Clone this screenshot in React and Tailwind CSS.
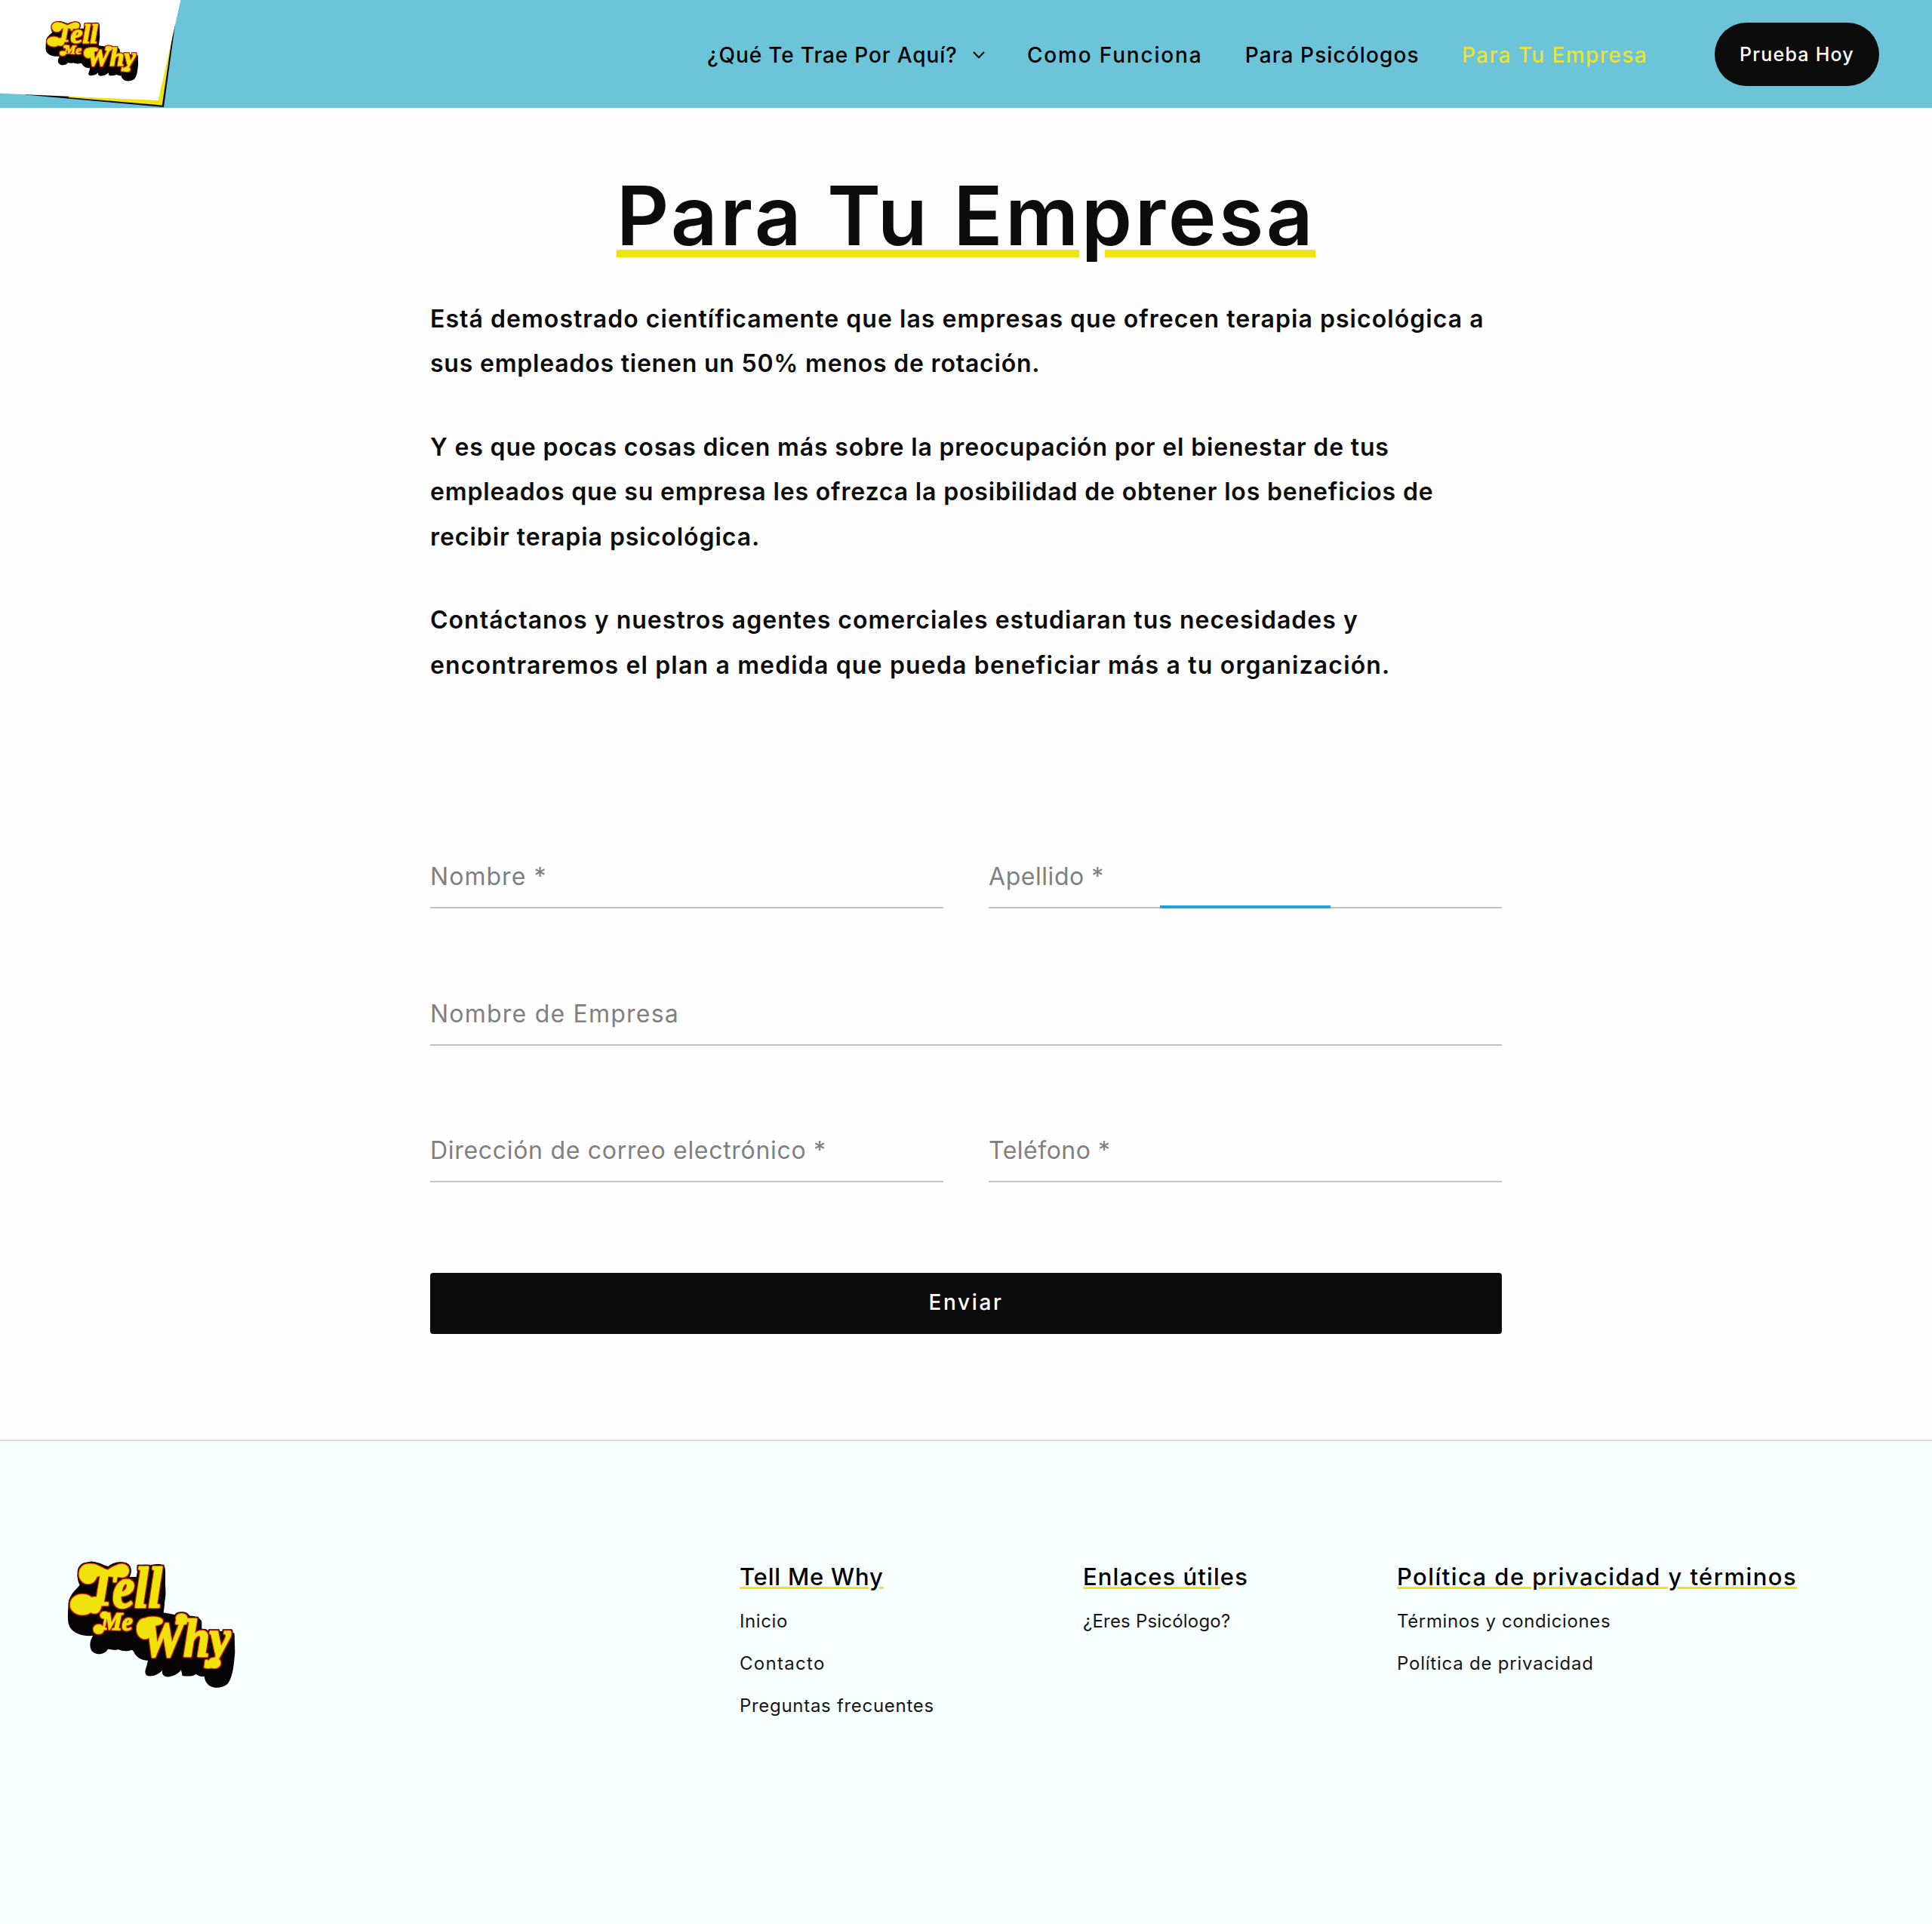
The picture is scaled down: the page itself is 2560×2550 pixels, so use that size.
import React from "react";

const BODY =
  "M92 255C96 218 124 200 137 182C110 130 150 86 190 89C215 91 235 105 250 108C270 91 300 86 325 96C345 106 345 132 335 150L362 150L368 118C375 100 400 98 420 104C440 96 470 96 475 112C480 130 475 160 478 200C480 230 474 245 474 262L470 292L515 300C530 285 560 286 575 305C600 305 620 315 622 330L622 372C650 366 740 362 752 375L754 450C750 500 745 550 725 575C700 596 660 594 645 575C635 565 634 555 632 545C615 548 605 540 598 536C592 546 560 546 545 543L540 520C525 540 500 549 480 547C465 542 462 530 466 520C450 540 425 548 405 543C393 535 397 520 402 508L408 482C390 483 362 475 352 448L345 440C320 448 300 444 290 438C275 445 255 435 248 438C240 456 205 466 185 445C173 425 178 400 190 383C165 388 115 380 98 350C86 330 90 300 92 255Z";

function TellMeWhy({ id, className }) {
  return (
    <svg className={className} viewBox="0 0 840 660" preserveAspectRatio="none" role="img" aria-label="Tell Me Why">
      <filter id={id} x="0" y="0" width="840" height="660" filterUnits="userSpaceOnUse" colorInterpolationFilters="sRGB">
        <feMorphology in="SourceAlpha" operator="dilate" radius="7" result="outer" />
        <feFlood floodColor="#1c0506" />
        <feComposite in2="outer" operator="in" result="dark" />
        <feMorphology in="SourceAlpha" operator="dilate" radius="4" result="inner" />
        <feFlood floodColor="#c8200f" />
        <feComposite in2="inner" operator="in" result="red" />
        <feMerge>
          <feMergeNode in="dark" />
          <feMergeNode in="red" />
          <feMergeNode in="SourceGraphic" />
        </feMerge>
      </filter>
      <path d={BODY} fill="#050304" />
      <g
        filter={`url(#${id})`}
        fill="#f0e30c"
        stroke="#f0e30c"
        strokeWidth="7"
        strokeLinejoin="round"
        fontFamily="'Liberation Serif', serif"
        fontWeight="700"
        fontStyle="italic"
      >
        <ellipse cx="148" cy="260" rx="46" ry="38" />
        <ellipse cx="170" cy="138" rx="33" ry="36" />
        <ellipse cx="304" cy="125" rx="26" ry="24" />
        <path d="M170 102C205 96 225 122 250 126C270 110 285 102 304 104L300 146C270 150 250 144 232 140C210 140 195 150 175 165Z" />
        <ellipse cx="196" cy="262" rx="24" ry="30" />
        <text x="168" y="262" fontSize="196" textLength="112" lengthAdjust="spacingAndGlyphs">T</text>
        <text x="268" y="270" fontSize="228" textLength="196" lengthAdjust="spacingAndGlyphs">ell</text>
        <ellipse cx="212" cy="358" rx="18" ry="16" />
        <ellipse cx="236" cy="302" rx="15" ry="11" />
        <text x="222" y="358" fontSize="100" strokeWidth="4" transform="rotate(2 222 358)" textLength="124" lengthAdjust="spacingAndGlyphs">Me</text>
        <ellipse cx="396" cy="356" rx="30" ry="38" />
        <ellipse cx="428" cy="326" rx="36" ry="15" />
        <ellipse cx="542" cy="314" rx="20" ry="16" />
        <text x="384" y="464" fontSize="210" textLength="352" lengthAdjust="spacingAndGlyphs">Why</text>
        <ellipse cx="672" cy="492" rx="22" ry="18" />
      </g>
    </svg>
  );
}

function Header() {
  return (
    <header className="flex h-[143px] items-center justify-end bg-[#6cc4d9] pr-[70px]">
      <div className="relative mr-auto h-[143px] w-[240px]">
        <svg className="block h-[143px] w-[240px]" viewBox="0 0 240 143" aria-hidden="true">
          <polygon points="232,33 217,142 33,125.5" fill="#0b0b0b" />
          <polygon points="228.5,46 214.8,139.5 90,129" fill="#efe40d" />
          <polygon points="0,0 239.4,0 209.7,133 0,123.8" fill="#ffffff" />
        </svg>
        <TellMeWhy id="logo-header" className="absolute left-[44px] top-[13.5px] h-[104.5px] w-[155px]" />
      </div>
      <nav className="mr-[89px] flex items-center gap-[56.3px] whitespace-nowrap pt-[2px] text-[28px] font-medium leading-[40px] text-black">
        <a className="flex items-center gap-[20px] tracking-[0.86px]">
          ¿Qué Te Trae Por Aquí?
          <svg className="h-[10px] w-[16px]" viewBox="0 0 16 10" fill="none" stroke="currentColor" strokeWidth="2">
            <path d="M1 1 8 8.3 15 1" />
          </svg>
        </a>
        <a className="tracking-[1.82px]">Como Funciona</a>
        <a className="tracking-[1.1px]">Para Psicólogos</a>
        <a className="tracking-[1.4px] text-[#eee32b]">Para Tu Empresa</a>
      </nav>
      <a className="flex h-[84px] w-[218px] items-center justify-center whitespace-nowrap rounded-full bg-[#0c0c0c] pt-[2px] text-[25px] font-medium tracking-[1.22px] text-white">
        Prueba Hoy
      </a>
    </header>
  );
}

function Field({ label, labelClass, wide, active }) {
  return (
    <div className={wide ? "relative col-span-2 border-b-2 border-[#c1c1c1] pb-[16px]" : "relative border-b-2 border-[#c1c1c1] pb-[16px]"}>
      <div className={`h-[48px] whitespace-nowrap text-[32px] leading-[48px] text-[#808080] ${labelClass}`}>{label}</div>
      {active && <div className="absolute -bottom-[2px] left-1/3 h-[4px] w-1/3 bg-[#22a3db]" />}
    </div>
  );
}

function Main() {
  return (
    <main className="bg-[#fefefe] pb-[140px] pt-[74px]">
      <h1 className="text-center text-[108px] font-semibold leading-[138px] tracking-[3.5px] text-[#0c0c0c] underline decoration-[#efe40d] decoration-[10px] underline-offset-[6px]">
        Para Tu Empresa
      </h1>
      <div className="mx-auto w-[1420px]">
        <div className="mt-[37.5px] flex flex-col gap-[51.1px] whitespace-nowrap text-[32px] font-semibold leading-[59.5px] text-[#0c0c0c]">
          <p>
            <span className="tracking-[1.04px]">Está demostrado científicamente que las empresas que ofrecen terapia psicológica a</span>
            <br />
            <span className="tracking-[0.79px]">sus empleados tienen un 50% menos de rotación.</span>
          </p>
          <p>
            <span className="tracking-[0.83px]">Y es que pocas cosas dicen más sobre la preocupación por el bienestar de tus</span>
            <br />
            <span className="tracking-[0.85px]">empleados que su empresa les ofrezca la posibilidad de obtener los beneficios de</span>
            <br />
            <span className="tracking-[0.96px]">recibir terapia psicológica.</span>
          </p>
          <p>
            <span className="tracking-[1.01px]">Contáctanos y nuestros agentes comerciales estudiaran tus necesidades y</span>
            <br />
            <span className="tracking-[1.16px]">encontraremos el plan a medida que pueda beneficiar más a tu organización.</span>
          </p>
        </div>
        <form className="mt-[227px]">
          <div className="grid grid-cols-2 gap-x-[60px] gap-y-[115.6px]">
            <Field label="Nombre *" labelClass="tracking-[1.05px]" />
            <Field label="Apellido *" labelClass="tracking-[0.55px]" active />
            <Field label="Nombre de Empresa" labelClass="tracking-[1.22px]" wide />
            <Field label="Dirección de correo electrónico *" labelClass="tracking-[0.7px]" />
            <Field label="Teléfono *" labelClass="tracking-[0.5px]" />
          </div>
          <button type="button" className="mt-[119.8px] block h-[81px] w-full rounded-[4px] bg-[#0c0c0c] pb-[3px] text-center text-[28px] font-medium leading-[40px] tracking-[2.6px] text-white">
            Enviar
          </button>
        </form>
      </div>
    </main>
  );
}

const HEADING = "h-[48px] text-[31px] font-medium leading-[48px] text-black";
const UNDERLINE = "underline decoration-[#ece02a] decoration-[3px] underline-offset-[2px]";
const LINKS = "mt-[7px] flex flex-col text-[24px] leading-[56px] text-[#161616]";

function Footer() {
  return (
    <footer className="grid h-[642px] grid-cols-[920px_454px_416px_1fr] whitespace-nowrap border-t-2 border-[#d8dbdc] bg-[#f8ffff] pl-[60px] pt-[130px]">
      <TellMeWhy id="logo-footer" className="h-[220px] w-[280px]" />
      <div className="pt-[26px]">
        <h2 className={HEADING}><span className={`tracking-[0.8px] ${UNDERLINE}`}>Tell Me Why</span></h2>
        <div className={LINKS}>
          <a className="tracking-[0.6px]">Inicio</a>
          <a className="tracking-[1.3px]">Contacto</a>
          <a className="tracking-[0.7px]">Preguntas frecuentes</a>
        </div>
      </div>
      <div className="pl-px pt-[26px]">
        <h2 className={HEADING}><span className="tracking-[1.1px]"><span className={UNDERLINE}>Enlaces útil</span>es</span></h2>
        <div className={LINKS}>
          <a className="tracking-[0.2px]">¿Eres Psicólogo?</a>
        </div>
      </div>
      <div className="pl-px pt-[26px]">
        <h2 className={HEADING}><span className={`tracking-[1.43px] ${UNDERLINE}`}>Política de privacidad y términos</span></h2>
        <div className={LINKS}>
          <a className="tracking-[0.62px]">Términos y condiciones</a>
          <a className="tracking-[0.78px]">Política de privacidad</a>
        </div>
      </div>
    </footer>
  );
}

export default function App() {
  return (
    <div className="w-full bg-[#fefefe] font-['Inter',sans-serif]">
      <Header />
      <Main />
      <Footer />
    </div>
  );
}
